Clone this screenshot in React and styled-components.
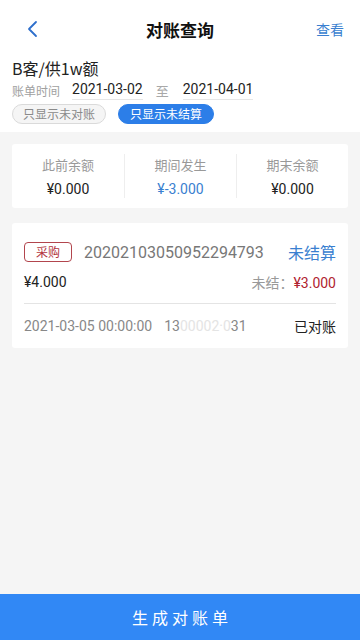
import React from "react";
import styled, { createGlobalStyle } from "styled-components";

const Global = createGlobalStyle`
  html, body { margin: 0; padding: 0; background: #f5f5f5; }
  body { font-family: "Noto Sans CJK SC", "Noto Sans", Roboto, sans-serif; }
  * { box-sizing: border-box; }
`;

const Page = styled.div`
  width: 360px;
  height: 640px;
  display: flex;
  flex-direction: column;
  background: #f5f5f5;
`;

const Top = styled.div`
  background: #fff;
  padding-bottom: 8px;
`;

const NavBar = styled.div`
  height: 58px;
  display: grid;
  grid-template-columns: 80px 1fr 80px;
  align-items: center;
`;

const Back = styled.div`
  padding-left: 26px;
  display: flex;
  align-items: center;
`;

const Title = styled.div`
  text-align: center;
  font-size: 17px;
  font-weight: 700;
  color: #111;
`;

const NavAction = styled.div`
  text-align: right;
  padding-right: 16px;
  font-size: 14px;
  color: #3a7fd0;
`;

const Filters = styled.div`
  padding: 0 12px;
  display: flex;
  flex-direction: column;
`;

const Name = styled.div`
  font-size: 16px;
  color: #222;
  line-height: 22px;
  margin-top: -1px;
`;

const DateRow = styled.div`
  display: flex;
  align-items: center;
  height: 22px;
`;

const Label = styled.span`
  font-size: 12px;
  color: #a0a0a0;
  margin-right: 12px;
`;

const DateField = styled.span`
  font-size: 14px;
  color: #222;
  border-bottom: 1px solid #e6e6e6;
  line-height: 18px;
  padding-bottom: 1px;
  font-family: Roboto, "Noto Sans CJK SC", sans-serif;
`;

const To = styled.span`
  font-size: 13px;
  color: #a8a8a8;
  margin: 0 14px 0 13px;
`;

const Pills = styled.div`
  display: flex;
  gap: 12px;
  margin-top: 3px;
`;

const Pill = styled.div`
  height: 20px;
  padding: 0 ${(p) => (p.$active ? "11px" : "10px")};
  border-radius: 10px;
  font-size: 12px;
  line-height: 18px;
  display: flex;
  align-items: center;
  border: 1px solid ${(p) => (p.$active ? "#2c7ee8" : "#dadada")};
  background: ${(p) => (p.$active ? "#2c7ee8" : "#f5f5f5")};
  color: ${(p) => (p.$active ? "#fff" : "#8a8a8a")};
`;

const Body = styled.div`
  flex: 1;
  padding: 12px 12px 0;
  display: flex;
  flex-direction: column;
  gap: 15px;
`;

const Summary = styled.div`
  background: #fff;
  border-radius: 3px;
  height: 64px;
  display: grid;
  grid-template-columns: 1fr 1fr 1fr;
  align-items: center;
`;

const SumCol = styled.div`
  display: flex;
  flex-direction: column;
  align-items: center;
  gap: 6px;
  border-left: ${(p) => (p.$first ? "none" : "1px solid #eeeeee")};
  height: 44px;
  justify-content: center;
  padding-top: 2px;
`;

const SumLabel = styled.div`
  font-size: 13px;
  color: #999;
  line-height: 18px;
`;

const SumValue = styled.div`
  font-size: 14px;
  line-height: 18px;
  color: ${(p) => p.$color || "#222"};
  font-family: Roboto, "Noto Sans CJK SC", sans-serif;
`;

const Card = styled.div`
  background: #fff;
  border-radius: 3px;
  padding: 17px 12px 0;
  display: flex;
  flex-direction: column;
`;

const Row = styled.div`
  display: flex;
  align-items: center;
  justify-content: space-between;
  margin-top: ${(p) => p.$gap || 0}px;
  height: ${(p) => (p.$h ? p.$h + "px" : "auto")};
`;

const Left = styled.div`
  display: flex;
  align-items: center;
`;

const Tag = styled.span`
  border: 1px solid #b2454d;
  color: #b2343d;
  border-radius: 4px;
  font-size: 12px;
  line-height: 18px;
  height: 20px;
  width: 48px;
  display: inline-flex;
  align-items: center;
  justify-content: center;
  margin-right: 12px;
`;

const OrderNo = styled.span`
  font-size: 16px;
  color: #777;
  font-family: Roboto, "Noto Sans CJK SC", sans-serif;
`;

const Status = styled.span`
  font-size: 16px;
  color: ${(p) => p.$color || "#222"};
`;

const Amount = styled.span`
  font-size: 14px;
  color: #222;
  font-family: Roboto, "Noto Sans CJK SC", sans-serif;
`;

const Unsettled = styled.span`
  font-size: 14px;
  color: #999;
`;

const Red = styled.span`
  color: #b0222f;
  font-family: Roboto, "Noto Sans CJK SC", sans-serif;
`;

const Divider = styled.div`
  height: 1px;
  background: #e4e4e4;
  margin-top: 11px;
`;

const Meta = styled.span`
  font-size: 14px;
  color: #888;
  font-family: Roboto, "Noto Sans CJK SC", sans-serif;
`;

const Faint = styled.span`
  color: #e4e4e4;
`;

const Phone = styled(Meta)`
  margin-left: 12px;
`;

const Done = styled.span`
  font-size: 14px;
  color: #222;
`;

const Bottom = styled.div`
  height: 46px;
  background: #3188f5;
  color: #fff;
  font-size: 16px;
  letter-spacing: 4px;
  display: flex;
  align-items: center;
  justify-content: center;
  padding-left: 4px;
`;

export default function App() {
  return (
    <Page>
      <Global />
      <Top>
        <NavBar>
          <Back>
            <svg width="14" height="18" viewBox="0 0 14 18">
              <path d="M10 2 L3 9 L10 16" fill="none" stroke="#2e6fcc" strokeWidth="1.8" strokeLinecap="round" strokeLinejoin="round" />
            </svg>
          </Back>
          <Title>对账查询</Title>
          <NavAction>查看</NavAction>
        </NavBar>
        <Filters>
          <Name>B客/供1w额</Name>
          <DateRow>
            <Label>账单时间</Label>
            <DateField>2021-03-02</DateField>
            <To>至</To>
            <DateField>2021-04-01</DateField>
          </DateRow>
          <Pills>
            <Pill>只显示未对账</Pill>
            <Pill $active>只显示未结算</Pill>
          </Pills>
        </Filters>
      </Top>
      <Body>
        <Summary>
          <SumCol $first>
            <SumLabel>此前余额</SumLabel>
            <SumValue>¥0.000</SumValue>
          </SumCol>
          <SumCol>
            <SumLabel>期间发生</SumLabel>
            <SumValue $color="#3a7fd0">¥-3.000</SumValue>
          </SumCol>
          <SumCol>
            <SumLabel>期末余额</SumLabel>
            <SumValue>¥0.000</SumValue>
          </SumCol>
        </Summary>
        <Card>
          <Row>
            <Left>
              <Tag>采购</Tag>
              <OrderNo>20202103050952294793</OrderNo>
            </Left>
            <Status $color="#3a7fd0">未结算</Status>
          </Row>
          <Row $gap={8}>
            <Amount>¥4.000</Amount>
            <Unsettled>
              未结：<Red>¥3.000</Red>
            </Unsettled>
          </Row>
          <Divider />
          <Row $h={44}>
            <Left>
              <Meta>2021-03-05 00:00:00</Meta>
              <Phone>
                13<Faint>00002·0</Faint>31
              </Phone>
            </Left>
            <Done>已对账</Done>
          </Row>
        </Card>
      </Body>
      <Bottom>生成对账单</Bottom>
    </Page>
  );
}
